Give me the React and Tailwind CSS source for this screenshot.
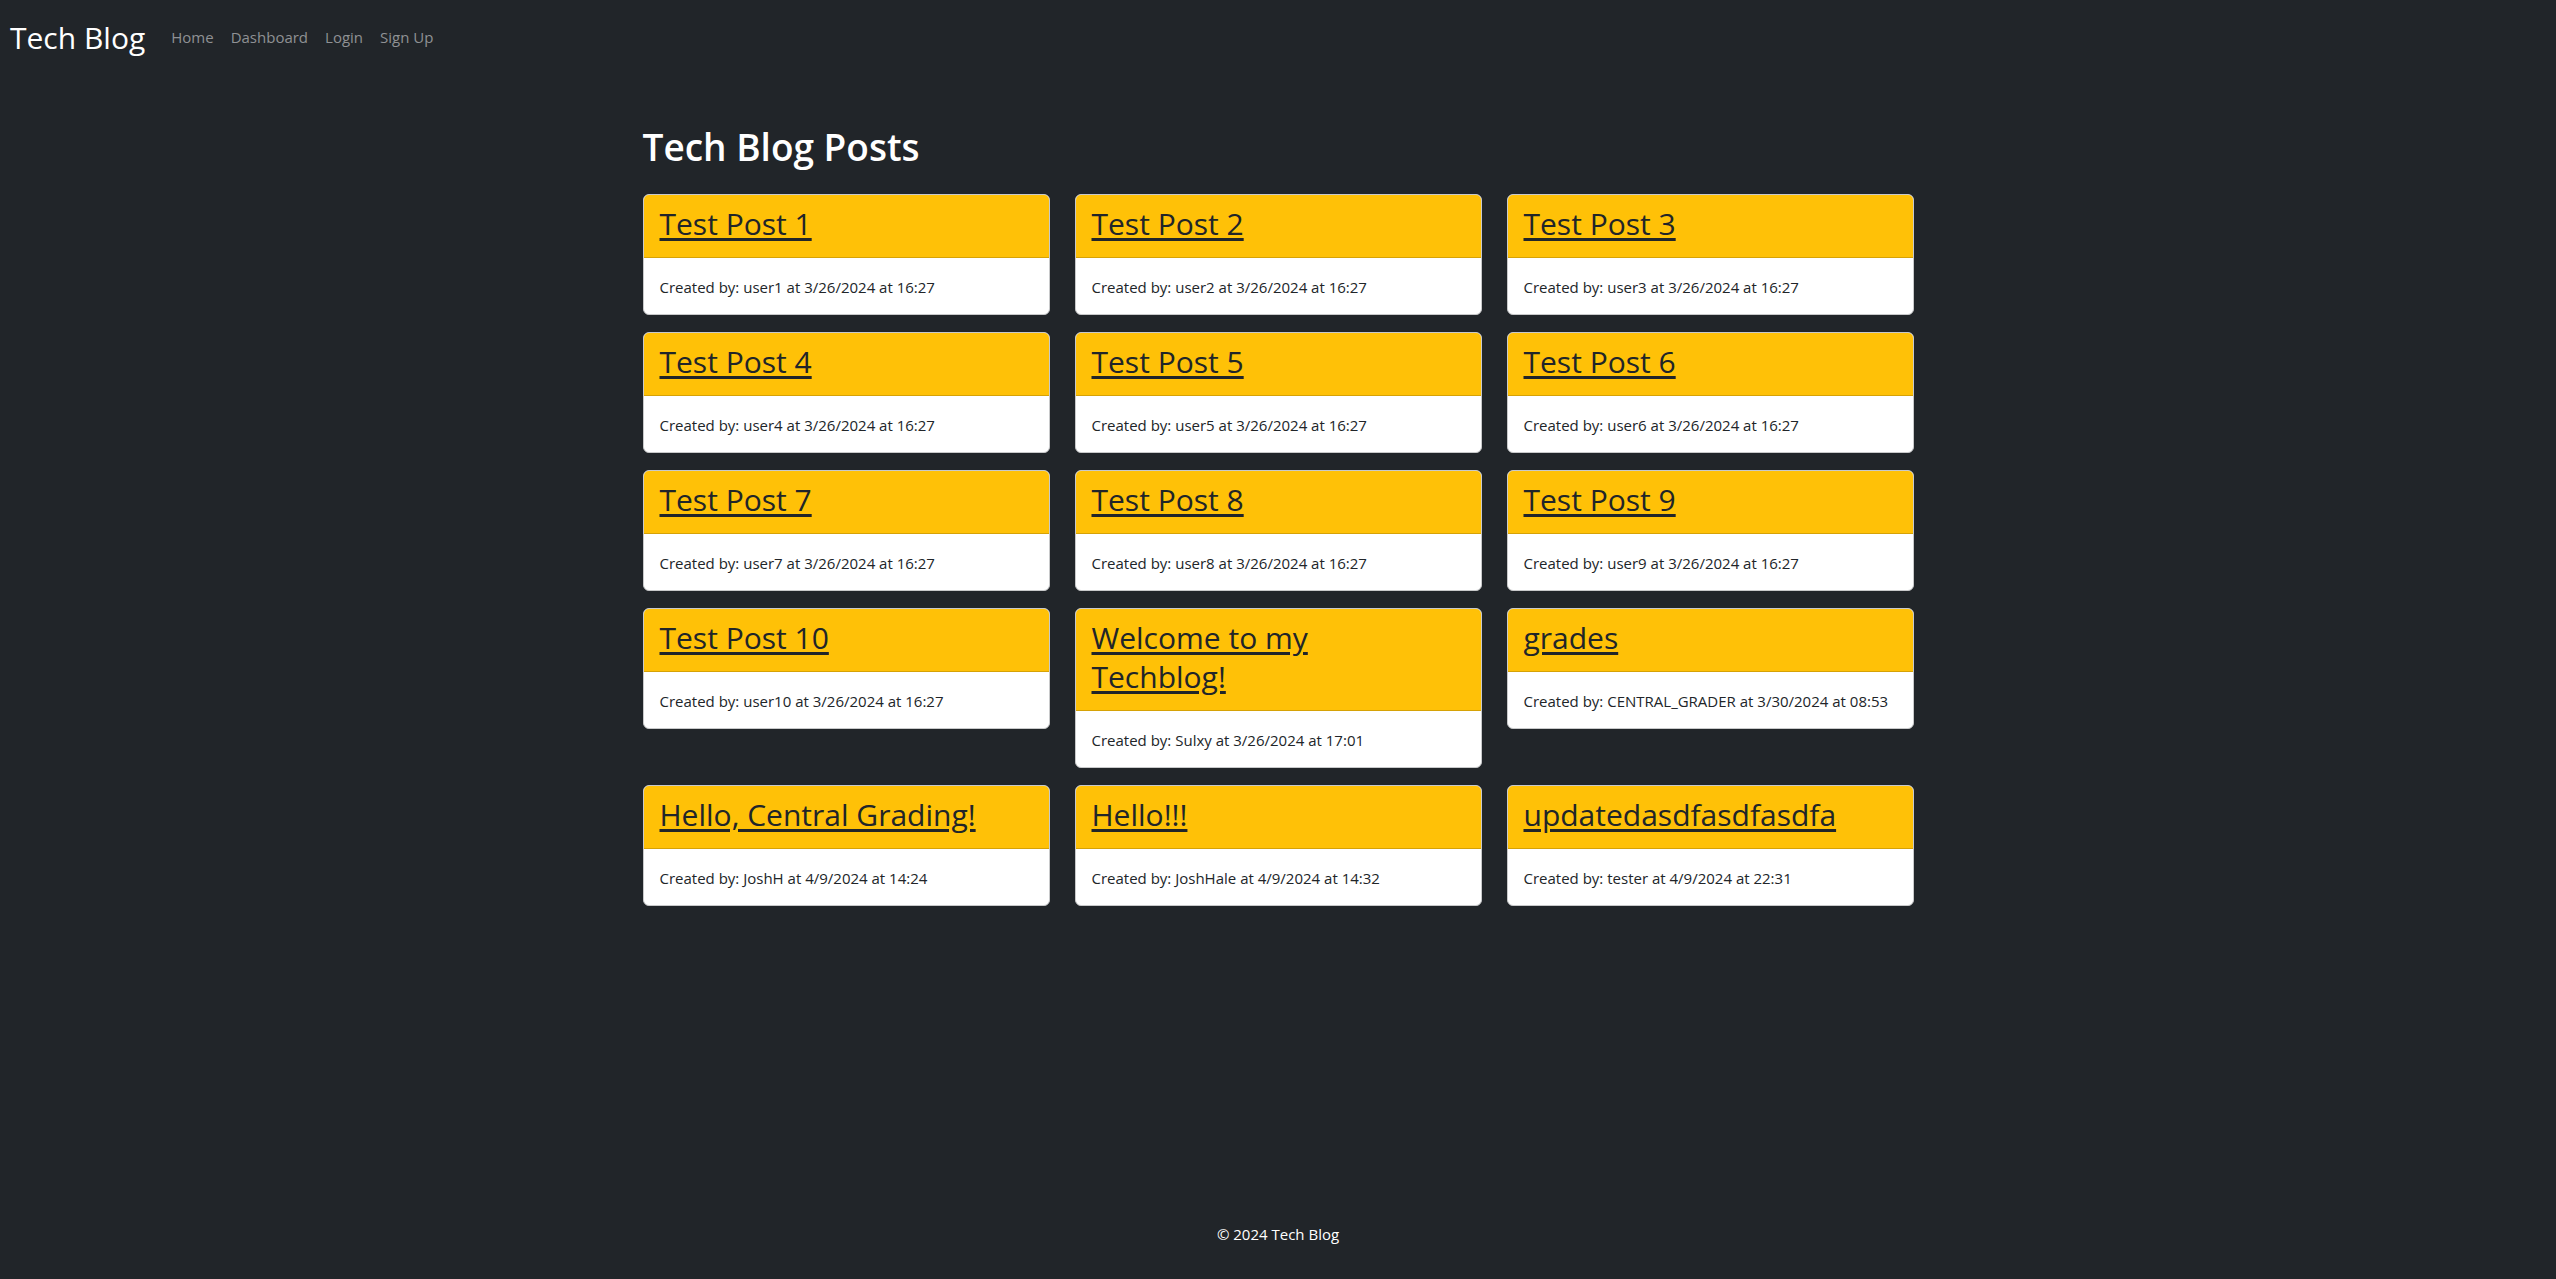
import React from "react";

const posts = [
  { title: "Test Post 1", user: "user1", date: "3/26/2024 at 16:27" },
  { title: "Test Post 2", user: "user2", date: "3/26/2024 at 16:27" },
  { title: "Test Post 3", user: "user3", date: "3/26/2024 at 16:27" },
  { title: "Test Post 4", user: "user4", date: "3/26/2024 at 16:27" },
  { title: "Test Post 5", user: "user5", date: "3/26/2024 at 16:27" },
  { title: "Test Post 6", user: "user6", date: "3/26/2024 at 16:27" },
  { title: "Test Post 7", user: "user7", date: "3/26/2024 at 16:27" },
  { title: "Test Post 8", user: "user8", date: "3/26/2024 at 16:27" },
  { title: "Test Post 9", user: "user9", date: "3/26/2024 at 16:27" },
  { title: "Test Post 10", user: "user10", date: "3/26/2024 at 16:27" },
  { title: "Welcome to my Techblog!", user: "Sulxy", date: "3/26/2024 at 17:01" },
  { title: "grades", user: "CENTRAL_GRADER", date: "3/30/2024 at 08:53" },
  { title: "Hello, Central Grading!", user: "JoshH", date: "4/9/2024 at 14:24" },
  { title: "Hello!!!", user: "JoshHale", date: "4/9/2024 at 14:32" },
  { title: "updatedasdfasdfasdfa", user: "tester", date: "4/9/2024 at 22:31" },
];

const PostCard = ({ post }) => {
  return (
    <div className="flex flex-col bg-white border border-[#c8c9ca] rounded-[6px] overflow-hidden">
      <header className="bg-[#ffc107] border-b border-[#d6a206] pl-[16px] pr-[40px] pt-[9px] pb-[14px]">
        <a
          href="#"
          className="text-[30px] leading-[39px] font-medium text-[#212529] underline decoration-[3px] underline-offset-[3px]"
        >
          {post.title}
        </a>
      </header>
      <main className="px-[16px] pt-[17px] pb-[14px] text-[15px] leading-[25px] text-[#212529]">
        Created by: {post.user} at {post.date}
      </main>
    </div>
  );
};

const App = () => {
  return (
    <div
      className="min-h-screen flex flex-col bg-[#212529] text-white"
      style={{ fontFamily: '"Open Sans", "Noto Sans", sans-serif' }}
    >
      <nav className="flex items-center px-[10px] pt-[13px] pb-[13px]">
        <a href="#" className="text-[30px] leading-[49px] text-white mr-[26px]">
          Tech Blog
        </a>
        <ul className="flex items-center gap-[17px] text-[15px] leading-[25px] text-[#8f9194]">
          <li>Home</li>
          <li>Dashboard</li>
          <li>Login</li>
          <li>Sign Up</li>
        </ul>
      </nav>
      <section className="mx-auto w-[1271px]">
        <h2 className="text-[37px] leading-[48px] font-semibold mt-[48px] mb-[23px]">
          Tech Blog Posts
        </h2>
        <main className="grid grid-cols-3 gap-x-[25px] gap-y-[17px] items-start">
          {posts.map((post) => (
            <PostCard key={post.title} post={post} />
          ))}
        </main>
      </section>
      <footer className="mt-auto pb-[32px] text-center text-[15px] leading-[25px]">
        © 2024 Tech Blog
      </footer>
    </div>
  );
};

export default App;
